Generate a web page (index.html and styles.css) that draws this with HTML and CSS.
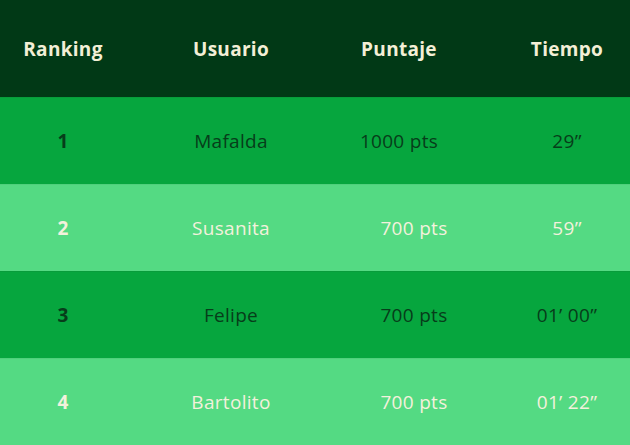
FILE: index.html
```html
<!DOCTYPE html>
<html lang="es">
<head>
<meta charset="utf-8">
<title>Ranking</title>
<link rel="stylesheet" href="styles.css">
</head>
<body>
<div class="board">
  <div class="row head">
    <div class="cell">Ranking</div>
    <div class="cell">Usuario</div>
    <div class="cell">Puntaje</div>
    <div class="cell">Tiempo</div>
  </div>
  <div class="row dark">
    <div class="cell rank">1</div>
    <div class="cell">Mafalda</div>
    <div class="cell">1000 pts</div>
    <div class="cell">29’’</div>
  </div>
  <div class="row light">
    <div class="cell rank">2</div>
    <div class="cell">Susanita</div>
    <div class="cell short">700 pts</div>
    <div class="cell">59’’</div>
  </div>
  <div class="row dark">
    <div class="cell rank">3</div>
    <div class="cell">Felipe</div>
    <div class="cell short">700 pts</div>
    <div class="cell">01’ 00’’</div>
  </div>
  <div class="row light">
    <div class="cell rank">4</div>
    <div class="cell">Bartolito</div>
    <div class="cell short">700 pts</div>
    <div class="cell">01’ 22’’</div>
  </div>
</div>
</body>
</html>
```

FILE: styles.css
```css
html, body {
  margin: 0;
  padding: 0;
}
body {
  width: 630px;
  height: 445px;
  overflow: hidden;
  font-family: "Open Sans", "Noto Sans", sans-serif;
  font-size: 19px;
  font-stretch: 95%;
  font-weight: 500;
  letter-spacing: 0.3px;
}
.board {
  display: flex;
  flex-direction: column;
}
.row {
  display: grid;
  grid-template-columns: repeat(4, 1fr);
  column-gap: 42px;
  align-items: center;
  height: 87px;
  box-sizing: border-box;
}
.cell {
  text-align: center;
  line-height: 24px;
}
.head {
  height: 97px;
  background: #013916;
  color: #f3efd6;
  font-weight: 700;
}
.dark {
  background: #06a63e;
  color: #063d1a;
  border-top: 1px solid #089c3b;
}
.light {
  background: #54da83;
  color: #f3f1dc;
  border-top: 1px solid #4fd07c;
}
.rank {
  font-weight: 700;
}
.short {
  padding-left: 30px;
}
```
